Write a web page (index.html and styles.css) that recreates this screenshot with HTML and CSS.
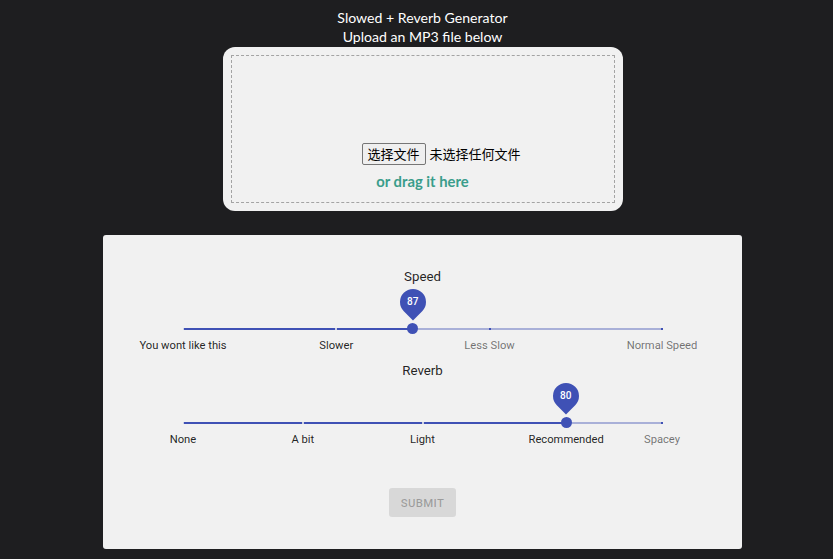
FILE: index.html
```html
<!DOCTYPE html>
<html lang="en">
<head>
<meta charset="utf-8">
<title>Slowed + Reverb Generator</title>
<link rel="stylesheet" href="styles.css">
</head>
<body>
<div class="page">
  <header class="title">
    <div>Slowed + Reverb Generator</div>
    <div>Upload an MP3 file below</div>
  </header>

  <div class="dropzone">
    <div class="dropzone-inner">
      <div class="file-row">
        <span class="file-btn">选择文件</span>
        <span class="file-name">未选择任何文件</span>
      </div>
      <div class="drag">or drag it here</div>
    </div>
  </div>

  <div class="card">
    <div class="slider-title">Speed</div>
    <div class="slider">
      <div class="rail"></div>
      <div class="track" style="width:48%"></div>
      <span class="mark mark-active" style="left:0%"></span>
      <span class="mark mark-active" style="left:32%"></span>
      <span class="mark" style="left:64%"></span>
      <span class="mark" style="left:100%"></span>
      <div class="thumb" style="left:48%"><div class="bubble"><span>87</span></div></div>
      <span class="mark-label label-active" style="left:0%">You wont like this</span>
      <span class="mark-label label-active" style="left:32%">Slower</span>
      <span class="mark-label" style="left:64%">Less Slow</span>
      <span class="mark-label" style="left:100%">Normal Speed</span>
    </div>

    <div class="slider-title">Reverb</div>
    <div class="slider">
      <div class="rail"></div>
      <div class="track" style="width:80%"></div>
      <span class="mark mark-active" style="left:0%"></span>
      <span class="mark mark-active" style="left:25%"></span>
      <span class="mark mark-active" style="left:50%"></span>
      <span class="mark mark-active" style="left:80%"></span>
      <span class="mark" style="left:100%"></span>
      <div class="thumb" style="left:80%"><div class="bubble"><span>80</span></div></div>
      <span class="mark-label label-active" style="left:0%">None</span>
      <span class="mark-label label-active" style="left:25%">A bit</span>
      <span class="mark-label label-active" style="left:50%">Light</span>
      <span class="mark-label label-active" style="left:80%">Recommended</span>
      <span class="mark-label" style="left:100%">Spacey</span>
    </div>

    <div class="actions">
      <button class="submit" type="button" disabled>Submit</button>
    </div>
  </div>
</div>
</body>
</html>
```

FILE: styles.css
```css
html, body {
  margin: 0;
  padding: 0;
}

body {
  background: #1e1e20;
  font-family: Lato, "Noto Sans", sans-serif;
  height: 559px;
  overflow: hidden;
}

.page {
  padding: 8px 0 0 12px;
}

.title {
  color: #ffffff;
  text-align: center;
  font-size: 14.1px;
  line-height: 19px;
}

.dropzone {
  width: 400px;
  height: 164px;
  margin: 1px auto 0;
  padding: 8px;
  box-sizing: border-box;
  background: #f1f1f1;
  border-radius: 12px;
}

.dropzone-inner {
  height: 100%;
  box-sizing: border-box;
  border: 1px dashed #a4a4a4;
  padding-top: 87px;
}

.file-row {
  display: flex;
  align-items: center;
  padding-left: 130px;
  height: 22px;
}

.file-btn {
  display: inline-block;
  box-sizing: border-box;
  height: 22px;
  line-height: 20px;
  padding: 0 5px;
  border: 1px solid #767676;
  border-radius: 2px;
  background: #efefef;
  color: #000;
  font-family: "Noto Sans CJK SC", sans-serif;
  font-size: 13px;
}

.file-name {
  margin-left: 4px;
  color: #000;
  font-family: "Noto Sans CJK SC", sans-serif;
  font-size: 13px;
  line-height: 20px;
}

.drag {
  margin-top: 7px;
  text-align: center;
  color: #3a9d8b;
  font-weight: 700;
  font-size: 14.8px;
  line-height: 19px;
}

.card {
  width: 639px;
  margin: 24px auto 0;
  box-sizing: border-box;
  padding: 32px 0 32px;
  background: #f1f1f1;
  border-radius: 3px;
  font-family: Roboto, "Liberation Sans", sans-serif;
}

.slider-title {
  text-align: center;
  font-size: 13.3px;
  line-height: 20px;
  color: rgba(0, 0, 0, 0.87);
}

.slider {
  position: relative;
  width: 479px;
  height: 74px;
  margin: 0 auto;
}

.rail,
.track {
  position: absolute;
  top: 41px;
  left: 0;
  height: 2px;
}

.rail {
  right: 0;
  background: rgba(63, 81, 181, 0.4);
}

.track {
  background: #3f51b5;
}

.mark {
  position: absolute;
  top: 41px;
  width: 2px;
  height: 2px;
  margin-left: -1px;
  background: #3f51b5;
}

.mark-active {
  background: rgba(241, 241, 241, 0.8);
}

.thumb {
  position: absolute;
  top: 36px;
  width: 11px;
  height: 11px;
  margin-left: -5.5px;
  border-radius: 50%;
  background: #3f51b5;
}

.bubble {
  position: absolute;
  left: -7.5px;
  top: -34px;
  width: 26px;
  height: 26px;
  border-radius: 50% 50% 50% 0;
  background: #3f51b5;
  transform: rotate(-45deg);
  display: flex;
  align-items: center;
  justify-content: center;
}

.bubble span {
  transform: rotate(45deg);
  color: #fff;
  font-size: 10px;
  font-weight: 500;
  line-height: 1;
}

.mark-label {
  position: absolute;
  top: 52px;
  transform: translateX(-50%);
  white-space: nowrap;
  font-size: 11.2px;
  line-height: 14px;
  color: rgba(0, 0, 0, 0.54);
}

.label-active {
  color: rgba(0, 0, 0, 0.87);
}

.actions {
  margin-top: 33px;
  display: flex;
  justify-content: center;
}

.submit {
  width: 67px;
  height: 29px;
  border: none;
  border-radius: 3px;
  background: rgba(0, 0, 0, 0.1);
  color: rgba(0, 0, 0, 0.28);
  font-family: Roboto, "Liberation Sans", sans-serif;
  font-size: 11.4px;
  font-weight: 500;
  letter-spacing: 0.35px;
  text-transform: uppercase;
  padding: 0;
}
```
